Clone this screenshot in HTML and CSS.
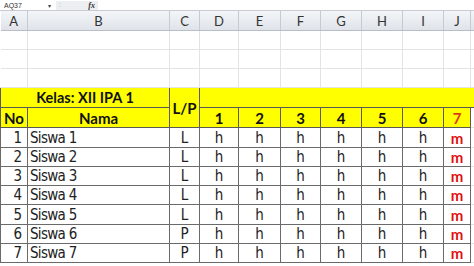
FILE: index.html
```html
<!DOCTYPE html>
<html lang="id">
<head>
<meta charset="UTF-8">
<meta name="viewport" content="width=device-width, initial-scale=1.0">
<title>Absensi Kelas XII IPA 1</title>
<link rel="stylesheet" href="styles.css">
</head>
<body>
<div class="formula-bar">
    <span class="name-box">AQ37</span>
    <span class="drop">&#9662;</span>
    <span class="fx-box"><span class="sep">:</span><i class="fx">fx</i></span>
</div>
<table class="grid">
    <colgroup>
        <col class="c-a"><col class="c-b"><col class="c-c"><col class="c-d"><col class="c-e">
        <col class="c-f"><col class="c-g"><col class="c-h"><col class="c-i"><col class="c-j"><col class="c-k">
    </colgroup>
    <tr class="col-heads">
        <th>A</th><th>B</th><th>C</th><th>D</th><th>E</th><th>F</th><th>G</th><th>H</th><th>I</th><th>J</th><th></th>
    </tr>
    <tr class="empty"><td></td><td></td><td></td><td></td><td></td><td></td><td></td><td></td><td></td><td></td><td></td></tr>
    <tr class="empty"><td></td><td></td><td></td><td></td><td></td><td></td><td></td><td></td><td></td><td></td><td></td></tr>
    <tr class="empty"><td></td><td></td><td></td><td></td><td></td><td></td><td></td><td></td><td></td><td></td><td></td></tr>
    <tr class="head r20">
        <td colspan="2" class="title">Kelas: XII IPA 1</td>
        <td rowspan="2" class="lp">L/P</td>
        <td colspan="8"></td>
    </tr>
    <tr class="head r20">
        <td>No</td><td>Nama</td>
        <td>1</td><td>2</td><td>3</td><td>4</td><td>5</td><td>6</td><td class="red">7</td><td class="blank"></td>
    </tr>
    <tr class="data r20"><td class="no">1</td><td class="name">Siswa 1</td><td>L</td><td>h</td><td>h</td><td>h</td><td>h</td><td>h</td><td>h</td><td class="m">m</td><td class="blank"></td></tr>
    <tr class="data r19"><td class="no">2</td><td class="name">Siswa 2</td><td>L</td><td>h</td><td>h</td><td>h</td><td>h</td><td>h</td><td>h</td><td class="m">m</td><td class="blank"></td></tr>
    <tr class="data r19"><td class="no">3</td><td class="name">Siswa 3</td><td>L</td><td>h</td><td>h</td><td>h</td><td>h</td><td>h</td><td>h</td><td class="m">m</td><td class="blank"></td></tr>
    <tr class="data r19"><td class="no">4</td><td class="name">Siswa 4</td><td>L</td><td>h</td><td>h</td><td>h</td><td>h</td><td>h</td><td>h</td><td class="m">m</td><td class="blank"></td></tr>
    <tr class="data r20"><td class="no">5</td><td class="name">Siswa 5</td><td>L</td><td>h</td><td>h</td><td>h</td><td>h</td><td>h</td><td>h</td><td class="m">m</td><td class="blank"></td></tr>
    <tr class="data r19"><td class="no">6</td><td class="name">Siswa 6</td><td>P</td><td>h</td><td>h</td><td>h</td><td>h</td><td>h</td><td>h</td><td class="m">m</td><td class="blank"></td></tr>
    <tr class="data r19"><td class="no">7</td><td class="name">Siswa 7</td><td>P</td><td>h</td><td>h</td><td>h</td><td>h</td><td>h</td><td>h</td><td class="m">m</td><td class="blank"></td></tr>
</table>
</body>
</html>
```

FILE: styles.css
```css
body {
    margin: 0;
    padding: 0;
    width: 474px;
    height: 266px;
    overflow: hidden;
    background-color: #fff;
    font-family: "DejaVu Sans Condensed", "DejaVu Sans", sans-serif;
}
.formula-bar {
    display: flex;
    align-items: center;
    height: 10px;
    border-bottom: 1px solid #c8ccd2;
    font-family: "Liberation Sans", sans-serif;
    font-size: 7px;
    color: #333;
}
.name-box {
    width: 44px;
    padding-left: 4px;
}
.drop {
    width: 8px;
    font-size: 6px;
    color: #444;
}
.fx-box {
    display: flex;
    justify-content: space-between;
    width: 36px;
    height: 9px;
    padding: 0 3px;
    background-color: #eceef1;
    color: #aaa;
}
.fx {
    font-family: "Liberation Serif", serif;
    font-size: 8px;
    color: #333;
    font-weight: bold;
}
.grid {
    border-collapse: collapse;
    table-layout: fixed;
    width: 490px;
}
.c-a { width: 27px; }
.c-b { width: 142px; }
.c-c { width: 30px; }
.c-d { width: 39px; }
.c-e { width: 42px; }
.c-f { width: 40px; }
.c-g { width: 41px; }
.c-h { width: 41px; }
.c-i { width: 41px; }
.c-j { width: 27px; }
.c-k { width: 20px; }
.grid td, .grid th {
    padding: 0;
    overflow: hidden;
    white-space: nowrap;
    text-align: center;
}
.col-heads th {
    height: 19px;
    background: linear-gradient(#f3f5f8, #dfe3e9);
    border-right: 1px solid #c5cbd3;
    border-bottom: 1px solid #b7bec8;
    font-family: Lato, sans-serif;
    font-weight: normal;
    font-size: 13px;
    color: #333;
}
.empty td {
    height: 18px;
    border-right: 1px solid #e3e3e3;
    border-bottom: 1px solid #e3e3e3;
}
.head td {
    background-color: #ffff00;
    border: 1px solid #5a5a50;
    font-family: Lato, sans-serif;
    font-weight: bold;
    font-size: 15px;
    color: #111;
}
.head .title {
    font-size: 14.5px;
}
.head .red {
    color: #e0381c;
}
.head .blank, .data .blank {
    background-color: #fff;
    border-right: none;
    border-bottom: 1px solid #e3e3e3;
}
.r20 td { height: 19px; }
.r19 td { height: 18px; }
.data td {
    border: 1px solid #6a6a6a;
    font-size: 15px;
    color: #222;
}
.data .no {
    text-align: right;
    padding-right: 5px;
}
.data .name {
    text-align: left;
    padding-left: 2px;
    letter-spacing: -0.7px;
}
.data .m {
    font-family: Lato, sans-serif;
    font-weight: bold;
    color: #e01010;
}
```
